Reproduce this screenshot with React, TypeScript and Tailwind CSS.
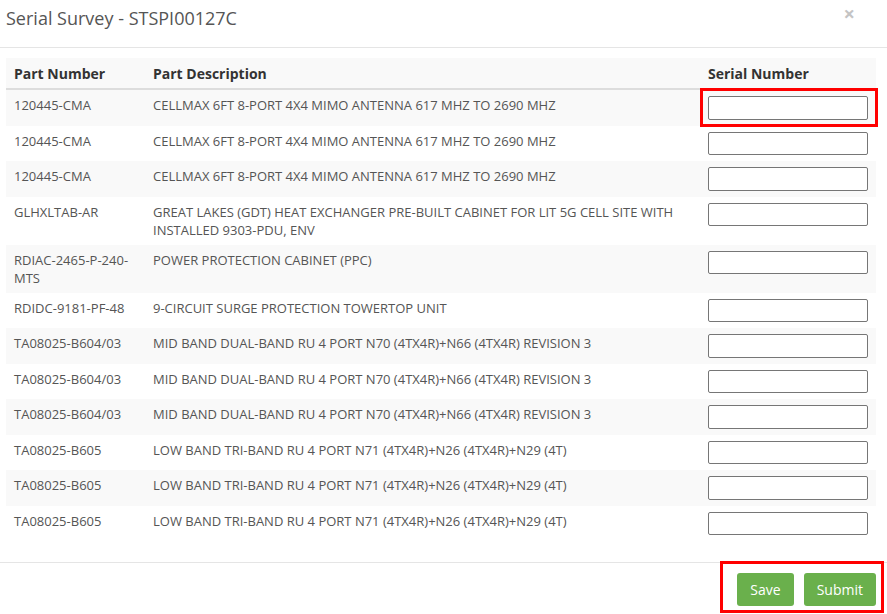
import React from 'react';

const rows = [
  { part: '120445-CMA', desc: 'CELLMAX 6FT 8-PORT 4X4 MIMO ANTENNA 617 MHZ TO 2690 MHZ' },
  { part: '120445-CMA', desc: 'CELLMAX 6FT 8-PORT 4X4 MIMO ANTENNA 617 MHZ TO 2690 MHZ' },
  { part: '120445-CMA', desc: 'CELLMAX 6FT 8-PORT 4X4 MIMO ANTENNA 617 MHZ TO 2690 MHZ' },
  { part: 'GLHXLTAB-AR', desc: 'GREAT LAKES (GDT) HEAT EXCHANGER PRE-BUILT CABINET FOR LIT 5G CELL SITE WITH INSTALLED 9303-PDU, ENV' },
  { part: 'RDIAC-2465-P-240-MTS', desc: 'POWER PROTECTION CABINET (PPC)' },
  { part: 'RDIDC-9181-PF-48', desc: '9-CIRCUIT SURGE PROTECTION TOWERTOP UNIT' },
  { part: 'TA08025-B604/03', desc: 'MID BAND DUAL-BAND RU 4 PORT N70 (4TX4R)+N66 (4TX4R) REVISION 3' },
  { part: 'TA08025-B604/03', desc: 'MID BAND DUAL-BAND RU 4 PORT N70 (4TX4R)+N66 (4TX4R) REVISION 3' },
  { part: 'TA08025-B604/03', desc: 'MID BAND DUAL-BAND RU 4 PORT N70 (4TX4R)+N66 (4TX4R) REVISION 3' },
  { part: 'TA08025-B605', desc: 'LOW BAND TRI-BAND RU 4 PORT N71 (4TX4R)+N26 (4TX4R)+N29 (4T)' },
  { part: 'TA08025-B605', desc: 'LOW BAND TRI-BAND RU 4 PORT N71 (4TX4R)+N26 (4TX4R)+N29 (4T)' },
  { part: 'TA08025-B605', desc: 'LOW BAND TRI-BAND RU 4 PORT N71 (4TX4R)+N26 (4TX4R)+N29 (4T)' },
];

export default function App() {
  return (
    <div className="relative w-[887px] h-[614px] bg-white text-[#555] overflow-hidden" style={{ fontFamily: '"Open Sans", sans-serif' }}>
      {/* header */}
      <div className="flex items-start justify-between h-[48px] border-b border-[#e5e5e5] pl-[6px] pr-[32px]">
        <h4 className="text-[18px] leading-[26px] pt-[5px] text-[#555]">Serial Survey - STSPI00127C</h4>
        <button className="text-[20px] font-bold leading-none pt-[4px] text-[#c4c4c4]">×</button>
      </div>

      {/* body */}
      <div className="px-[6px] pt-[10px] pb-[21px] pr-[11px]">
        <table className="w-full table-fixed border-collapse text-[13px]">
          <colgroup>
            <col className="w-[139px]" />
            <col />
            <col className="w-[176px]" />
          </colgroup>
          <thead>
            <tr className="bg-[#f9f9f9] border-b-2 border-[#ddd] text-[#333] text-[14px] font-bold">
              <th className="text-left px-[8px] pt-[7px] pb-[5px] leading-[18px]">Part Number</th>
              <th className="text-left px-[8px] pt-[7px] pb-[5px] leading-[18px]">Part Description</th>
              <th className="text-left px-[8px] pt-[7px] pb-[5px] leading-[18px]">Serial Number</th>
            </tr>
          </thead>
          <tbody>
            {rows.map((r, i) => (
              <tr key={i} className={i % 2 === 0 ? 'bg-[#f9f9f9]' : 'bg-white'}>
                <td className="align-top px-[8px] py-[6px] leading-[18px] break-words">{r.part}</td>
                <td className="align-top px-[8px] py-[6px] leading-[18px]">{r.desc}</td>
                <td className="align-top px-[8px] py-[6px]">
                  <input type="text" className="block w-[160px] h-[23.5px] bg-white border border-[#767676] rounded-[2px] outline-none" />
                </td>
              </tr>
            ))}
          </tbody>
        </table>
      </div>

      {/* footer */}
      <div className="flex justify-end gap-[10px] border-t border-[#e5e5e5] pt-[10px] pr-[11px]">
        <button className="h-[33px] px-[13px] rounded-[3px] bg-[#6ab04c] text-white text-[14px]">Save</button>
        <button className="h-[33px] px-[13px] rounded-[3px] bg-[#6ab04c] text-white text-[14px]">Submit</button>
      </div>

      {/* annotation boxes */}
      <div className="absolute left-[700px] top-[88px] w-[178px] h-[39px] border-[3px] border-[#ff0000]" />
      <div className="absolute left-[720px] top-[561px] w-[164px] h-[52px] border-[3px] border-[#ff0000]" />
    </div>
  );
}
